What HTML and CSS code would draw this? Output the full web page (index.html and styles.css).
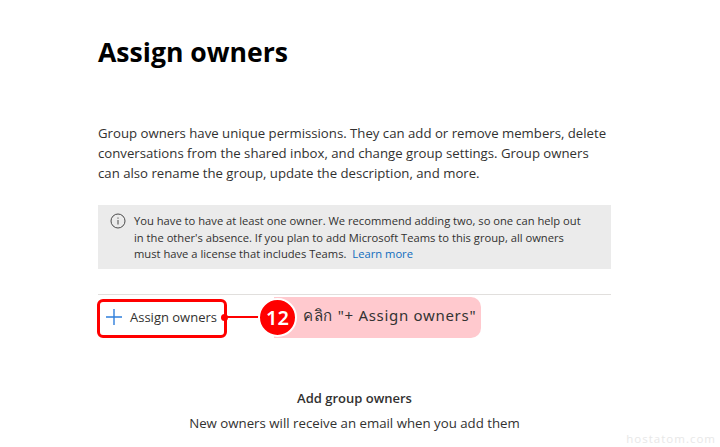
FILE: index.html
```html
<!DOCTYPE html>
<html>
<head>
    <title>Assign owners</title>
    <meta name="viewport" content="width=device-width, initial-scale=1.0">
    <link rel="stylesheet" href="styles.css">
</head>
<body>
    <div class="container">
        <h1>Assign owners</h1>
        <p class="intro">Group owners have unique permissions. They can add or remove members, delete conversations from the shared inbox, and change group settings. Group owners can also rename the group, update the description, and more.</p>

        <div class="notice">
            <svg class="notice-icon" width="16" height="16" viewBox="0 0 16 16">
                <circle cx="8" cy="8" r="7" fill="none" stroke="#4a4a4a" stroke-width="1"/>
                <rect x="7.5" y="7" width="1" height="4.5" fill="#4a4a4a"/>
                <rect x="7.5" y="4.5" width="1" height="1.2" fill="#4a4a4a"/>
            </svg>
            <p>You have to have at least one owner. We recommend adding two, so one can help out<br>in the other's absence. If you plan to add Microsoft Teams to this group, all owners<br>must have a license that includes Teams. <a href="#">Learn more</a></p>
        </div>

        <div class="toolbar">
            <button class="assign-btn">
                <svg width="18" height="18" viewBox="0 0 18 18">
                    <path d="M9 1v16M1 9h16" stroke="#2f7fdc" stroke-width="1.4" fill="none"/>
                </svg>
                Assign owners
            </button>
        </div>

        <div class="empty">
            <h2>Add group owners</h2>
            <p>New owners will receive an email when you add them</p>
        </div>
    </div>

    <!-- annotation on top of the page -->
    <div class="mark-box"></div>
    <div class="mark-dot"></div>
    <div class="mark-line"></div>
    <div class="mark-label">คลิก "+ Assign owners"</div>
    <div class="mark-num">12</div>
    <div class="watermark">hostatom.com</div>
</body>
</html>
```

FILE: styles.css
```css
html, body {
    height: 100%;
}

body {
    margin: 0;
    background-color: #fff;
    font-family: "Open Sans", "Noto Sans", sans-serif;
    color: #323130;
    overflow: hidden;
    position: relative;
}

.container {
    width: 513px;
    margin-left: 98px;
    padding-top: 35px;
}

h1 {
    margin: 0;
    font-size: 26.6px;
    line-height: 34px;
    font-weight: 700;
    color: #000;
}

.intro {
    margin: 54px 0 0;
    font-size: 13.2px;
    line-height: 20px;
}

.notice {
    display: flex;
    gap: 8px;
    margin-top: 22px;
    padding: 8px 12px;
    height: 48px;
    background-color: #ebebeb;
}

.notice-icon {
    flex: none;
}

.notice p {
    margin: 0;
    font-size: 11.2px;
    line-height: 16.5px;
    white-space: nowrap;
}

.notice a {
    margin-left: 3px;
    color: #0f6cbd;
    text-decoration: none;
}

.toolbar {
    margin-top: 25px;
    padding-top: 3px;
    border-top: 1px solid #e1dfdd;
}

.assign-btn {
    display: flex;
    align-items: center;
    gap: 7px;
    width: 128px;
    height: 37px;
    padding: 0 0 0 7px;
    border: none;
    background: none;
    font-family: inherit;
    font-size: 13px;
    color: #323130;
}

.empty {
    margin-top: 53px;
    text-align: center;
}

.empty h2 {
    margin: 0;
    font-size: 13px;
    line-height: 20px;
    font-weight: 600;
}

.empty p {
    margin: 5px 0 0;
    font-size: 13.25px;
    line-height: 20px;
}

.mark-box {
    position: absolute;
    left: 97px;
    top: 299px;
    width: 124px;
    height: 33px;
    border: 3px solid #f00;
    border-radius: 6px;
}

.mark-dot {
    position: absolute;
    left: 221px;
    top: 314px;
    width: 7px;
    height: 7px;
    border-radius: 50%;
    background-color: #f00;
}

.mark-line {
    position: absolute;
    left: 226px;
    top: 316px;
    width: 36px;
    height: 2px;
    background-color: #f00;
}

.mark-label {
    position: absolute;
    left: 274px;
    top: 297px;
    width: 207px;
    height: 41px;
    box-sizing: border-box;
    padding-left: 29px;
    border-radius: 0 10px 10px 0;
    background-color: #ffc9ce;
    font-family: "Noto Sans", "DejaVu Sans", sans-serif;
    font-size: 15px;
    line-height: 37px;
    letter-spacing: 0.7px;
    color: #333;
    white-space: nowrap;
}

.mark-num {
    position: absolute;
    left: 258px;
    top: 298px;
    width: 35px;
    height: 35px;
    border: 2px solid #fff;
    border-radius: 50%;
    background-color: #f00;
    color: #fff;
    font-family: "Noto Sans", sans-serif;
    font-size: 20px;
    font-weight: 600;
    line-height: 35px;
    text-align: center;
}

.watermark {
    position: absolute;
    right: 4px;
    bottom: 1px;
    font-size: 11.5px;
    letter-spacing: 1px;
    color: #e8e8e8;
}
```
